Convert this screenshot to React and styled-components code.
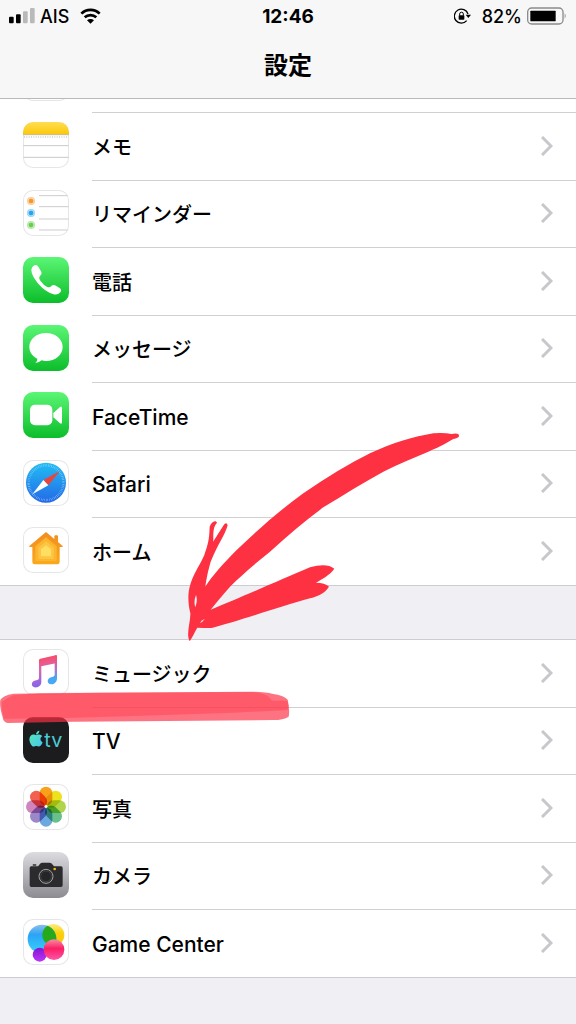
import styled, { createGlobalStyle } from "styled-components";
import { FaApple } from "react-icons/fa";

const GlobalStyle = createGlobalStyle`
  * {
    box-sizing: border-box;
  }

  body {
    margin: 0;
    background-color: #efeff4;
    color: #000;
    font-family: Inter, "Noto Sans CJK JP", sans-serif;
  }
`;

const MemoIcon = () => (
  <IconSvg viewBox="0 0 138 138">
    <defs>
      <linearGradient id="memo" x1="0" y1="0" x2="0" y2="1">
        <stop offset="0" stopColor="#ffde4f" />
        <stop offset="1" stopColor="#fbc70a" />
      </linearGradient>
    </defs>
    <path d="M0 38V30Q0 0 30 0H108Q138 0 138 30V38Z" fill="url(#memo)" />
    <path d="M0 38H138" stroke="#c6b98a" strokeWidth="3" />
    <path d="M3 45H136" stroke="#b5b5b5" strokeWidth="3" strokeDasharray="3 4" />
    <path d="M1 71H137M1 106H137" stroke="#c9c9cc" strokeWidth="3" />
  </IconSvg>
);

const ReminderIcon = () => (
  <IconSvg viewBox="0 0 138 138">
    <path d="M48 17H134M48 50H137M48 87H137M48 120H134" stroke="#cdcbd0" strokeWidth="3" />
    {[["#f39a2b", 33], ["#27a5ea", 69], ["#67cf4b", 105]].map(([color, y]) => (
      <g key={color}>
        <circle cx="24" cy={y} r="12" fill={color} opacity="0.5" />
        <circle cx="24" cy={y} r="9" fill="none" stroke="#fff" strokeWidth="1" opacity="0.7" />
        <circle cx="24" cy={y} r="7" fill={color} />
      </g>
    ))}
  </IconSvg>
);

const PhoneIcon = () => (
  <IconSvg viewBox="0 0 138 138">
    <path
      d="M34 25Q42 21 47 31L55 45Q58 52 51 57Q46 62 52 71Q61 84 73 90Q80 93 85 87Q90 82 96 85L111 94Q117 99 112 106Q104 115 92 112Q66 105 44 78Q25 54 25 38Q26 29 34 25Z"
      fill="#fff"
    />
  </IconSvg>
);

const MessageIcon = () => (
  <IconSvg viewBox="0 0 138 138">
    <path
      d="M69 24C97 24 119 42 119 66C119 90 97 108 69 108Q62 108 56 106Q49 113 37 114Q44 108 43 101C28 94 19 81 19 66C19 42 41 24 69 24Z"
      fill="#fff"
    />
  </IconSvg>
);

const FaceTimeIcon = () => (
  <IconSvg viewBox="0 0 138 138">
    <rect x="21" y="38" width="67" height="62" rx="15" fill="#fff" />
    <path d="M91 63L111 45Q117 41 117 49V90Q117 98 111 94L91 76Z" fill="#fff" />
  </IconSvg>
);

const SafariIcon = () => (
  <IconSvg viewBox="0 0 138 138">
    <defs>
      <linearGradient id="safari" x1="0" y1="0" x2="0" y2="1">
        <stop offset="0" stopColor="#22bdf4" />
        <stop offset="1" stopColor="#2469e6" />
      </linearGradient>
    </defs>
    <circle cx="69" cy="68" r="60" fill="url(#safari)" />
    <circle cx="69" cy="68" r="52" fill="none" stroke="#bfe6fb" strokeWidth="7" strokeDasharray="1 4" />
    <path d="M111 33L76 76L61 60Z" fill="#e9453f" />
    <path d="M28 103L61 60L76 76Z" fill="#fff" />
  </IconSvg>
);

const HomeIcon = () => (
  <IconSvg viewBox="0 0 138 138">
    <defs>
      <linearGradient id="home" x1="0" y1="0" x2="0" y2="1">
        <stop offset="0" stopColor="#f18d20" />
        <stop offset="1" stopColor="#fba81b" />
      </linearGradient>
    </defs>
    <path
      d="M69 15L94 36V28Q94 25 97 25H102Q105 25 105 28V45L119 57Q121 60 118 60H110V105Q110 112 103 112H35Q28 112 28 105V60H20Q17 60 19 57Z"
      fill="url(#home)"
    />
    <path d="M69 31L101 58V99Q101 103 97 103H41Q37 103 37 99V58Z" fill="#fcb52e" />
    <path d="M69 43L92 62V93Q92 96 89 96H49Q46 96 46 93V62Z" fill="#fdc544" />
    <path d="M69 55L84 67V85Q84 88 81 88H57Q54 88 54 85V67Z" fill="#ffdf62" />
  </IconSvg>
);

const MusicIcon = () => (
  <IconSvg viewBox="0 0 138 138">
    <defs>
      <linearGradient id="music" x1="0.3" y1="0" x2="0.5" y2="1">
        <stop offset="0.1" stopColor="#fb4b68" />
        <stop offset="0.45" stopColor="#d768b4" />
        <stop offset="1" stopColor="#7664fa" />
      </linearGradient>
      <linearGradient id="musicStem" x1="0" y1="0" x2="0" y2="1">
        <stop offset="0.1" stopColor="#f5506f" />
        <stop offset="0.45" stopColor="#b86fc9" />
        <stop offset="0.8" stopColor="#45a9f3" />
      </linearGradient>
    </defs>
    <path
      d="M48 34Q48 30 52 29L98 19Q102 18 102 22V42L55 52V99Q55 109 45 114Q34 118 28 111Q24 103 31 97Q36 94 43 93Q48 92 48 87Z"
      fill="url(#music)"
    />
    <path
      d="M95 20L98 19Q102 18 102 22V88Q102 99 93 104Q82 109 76 102Q71 94 79 87Q84 84 90 83Q95 82 95 77Z"
      fill="url(#musicStem)"
    />
  </IconSvg>
);

const TvIcon = () => (
  <IconSvg viewBox="0 0 138 138">
    <defs>
      <linearGradient id="tv" x1="0" y1="0" x2="1" y2="1">
        <stop offset="0" stopColor="#57ecb5" />
        <stop offset="1" stopColor="#45c5ee" />
      </linearGradient>
    </defs>
    <FaApple x="12" y="38" size="54" fill="url(#tv)" />
    <text x="64" y="89" fontSize="59" fontWeight="400" fill="#4ccbd6">tv</text>
  </IconSvg>
);

const petals = ["#f9a11b", "#ede21e", "#b0d44c", "#68c08c", "#6ba8df", "#9a88c9", "#cf86bd", "#f2604f"];

const PhotosIcon = () => (
  <IconSvg viewBox="0 0 138 138">
    {petals.map((color, i) => (
      <Petal key={color} x="50" y="8" width="38" height="57" rx="19" fill={color} transform={`rotate(${i * 45} 69 68)`} />
    ))}
    <circle cx="69" cy="67" r="4" fill="#fff" />
  </IconSvg>
);

const CameraIcon = () => (
  <IconSvg viewBox="0 0 138 138">
    <rect x="29" y="36" width="11" height="6" rx="2" fill="#555558" />
    <path
      d="M25 43H44Q48 42 50 37Q52 32 58 32H80Q86 32 88 37Q90 42 94 43H114Q119 43 119 48V100Q119 105 114 105H25Q20 105 20 100V48Q20 43 25 43Z"
      fill="#2b2b2d"
    />
    <circle cx="69" cy="73" r="21" fill="#2b2b2d" stroke="#a2a2a6" strokeWidth="3" />
    <circle cx="69" cy="73" r="16" fill="#252527" stroke="#4c4c50" strokeWidth="2" />
    <circle cx="95" cy="51" r="4" fill="#f8b90f" />
  </IconSvg>
);

const GameCenterIcon = () => (
  <IconSvg viewBox="0 0 138 138">
    <defs>
      <linearGradient id="gcBlue" x1="0" y1="0" x2="0" y2="1">
        <stop offset="0" stopColor="#8cc0e8" />
        <stop offset="0.35" stopColor="#2ba3f6" />
        <stop offset="1" stopColor="#38d4fb" />
      </linearGradient>
      <linearGradient id="gcYellow" x1="0" y1="0" x2="0" y2="1">
        <stop offset="0" stopColor="#f9ee8a" />
        <stop offset="0.4" stopColor="#fbd20a" />
        <stop offset="1" stopColor="#fcc316" />
      </linearGradient>
      <linearGradient id="gcPink" x1="0" y1="0" x2="0" y2="1">
        <stop offset="0" stopColor="#f98aa0" />
        <stop offset="0.45" stopColor="#fb1f66" />
        <stop offset="1" stopColor="#fd55a8" />
      </linearGradient>
      <linearGradient id="gcPurple" x1="0" y1="0" x2="0" y2="1">
        <stop offset="0" stopColor="#8514cf" />
        <stop offset="1" stopColor="#ba36fa" />
      </linearGradient>
      <clipPath id="gcOverlap">
        <circle cx="91" cy="48" r="33" />
      </clipPath>
    </defs>
    <circle cx="91" cy="48" r="33" fill="url(#gcYellow)" />
    <circle cx="57" cy="60" r="43" fill="url(#gcBlue)" />
    <circle cx="57" cy="60" r="43" fill="#26a91b" clipPath="url(#gcOverlap)" />
    <circle cx="50" cy="107" r="21" fill="url(#gcPurple)" />
    <circle cx="93" cy="92" r="31" fill="url(#gcPink)" />
  </IconSvg>
);

const GREEN = "linear-gradient(#5bf675, #0cbd2a)";

const apps = [
  { name: "メモ", Icon: MemoIcon },
  { name: "リマインダー", Icon: ReminderIcon },
  { name: "電話", Icon: PhoneIcon, background: GREEN },
  { name: "メッセージ", Icon: MessageIcon, background: GREEN },
  { name: "FaceTime", Icon: FaceTimeIcon, background: GREEN, latin: true },
  { name: "Safari", Icon: SafariIcon, latin: true },
  { name: "ホーム", Icon: HomeIcon },
];

const media = [
  { name: "ミュージック", Icon: MusicIcon },
  { name: "TV", Icon: TvIcon, background: "#1c1c1e", latin: true },
  { name: "写真", Icon: PhotosIcon },
  { name: "カメラ", Icon: CameraIcon, background: "linear-gradient(#dcdbe0, #8b8b91)" },
  { name: "Game Center", Icon: GameCenterIcon, latin: true },
];

const SettingsGroup = ({ items }) => (
  <Group>
    {items.map(({ name, Icon, background, latin }) => (
      <Row key={name}>
        <RowLink href="#!">
          <AppIcon $background={background}>
            <Icon />
          </AppIcon>
          <RowBody>
            <RowLabel $latin={latin}>{name}</RowLabel>
            <Chevron viewBox="0 0 12 20">
              <path d="M1 1L10 10L1 19" fill="none" stroke="#c7c7cc" strokeWidth="3" />
            </Chevron>
          </RowBody>
        </RowLink>
      </Row>
    ))}
  </Group>
);

const App = () => {
  return (
    <Page>
      <GlobalStyle />
      <Header>
        <StatusBar>
          <StatusSide>
            <svg width="26" height="16" viewBox="0 0 78 48">
              <rect x="0" y="26" width="14" height="20" rx="3" fill="#000" />
              <rect x="21" y="19" width="14" height="27" rx="3" fill="#000" />
              <rect x="42" y="10" width="14" height="36" rx="3" fill="#b9b9b9" />
              <rect x="63" y="0" width="14" height="46" rx="3" fill="#b9b9b9" />
            </svg>
            <span>AIS</span>
            <WifiSvg viewBox="0 0 63 48">
              <path d="M4 17A39 39 0 0 1 59 17M14 28A26 26 0 0 1 49 28" fill="none" stroke="#000" strokeWidth="8" />
              <path d="M31.5 47L21 37A15 15 0 0 1 42 37Z" />
            </WifiSvg>
          </StatusSide>
          <Time>12:46</Time>
          <StatusSide $end>
            <LockSvg viewBox="0 0 54 48">
              <path d="M42 18A21 21 0 1 0 38 38" fill="none" stroke="#000" strokeWidth="4" />
              <path d="M35 20H51L43 30Z" />
              <rect x="14" y="22" width="17" height="13" rx="2" />
              <path d="M17 23V18A5 5 0 0 1 28 18V23" fill="none" stroke="#000" strokeWidth="3" />
            </LockSvg>
            <span>82%</span>
            <svg width="40" height="18" viewBox="0 0 120 54">
              <rect x="2" y="3" width="106" height="48" rx="12" fill="none" stroke="#8c8c8c" strokeWidth="4" />
              <rect x="10" y="11" width="76" height="32" rx="2" />
              <path d="M113 19Q119 27 113 35Z" fill="#8c8c8c" />
            </svg>
          </StatusSide>
        </StatusBar>
        <Title>設定</Title>
      </Header>
      <main>
        <CutRow>
          <AppIcon />
          <CutBody />
        </CutRow>
        <SettingsGroup items={apps} />
        <SettingsGroup items={media} />
      </main>
      <Arrow viewBox="0 0 900 690">
        <path
          fillRule="evenodd"
          d="M58 662C48 640 62 605 61 580C54 550 52 520 62 490C75 450 100 420 106 395C117 365 118 345 119 320C124 306 136 299 141 308C134 318 129 320 130 365C142 345 155 325 163 313Q170 306 173 316C165 345 145 370 122 425C112 460 109 480 106 500C125 470 160 430 200 390C265 328 330 270 400 220C470 172 535 132 600 100C670 68 730 50 790 40Q820 37 845 42Q868 38 867 48Q866 54 850 57C820 75 800 84 775 95C730 114 685 132 640 155C580 188 520 225 460 262C405 303 352 348 300 395C250 435 210 470 180 500Q145 540 122 569C200 538 330 480 420 442Q470 428 493 446C480 465 455 478 438 488Q465 488 477 500C465 520 440 530 420 535C330 560 200 605 125 624Q100 624 82 623C72 640 66 655 60 662ZM78 525Q84 540 76 562Q70 545 78 525ZM104 597Q98 606 90 609Q94 600 104 597Z"
        />
      </Arrow>
      <Marker viewBox="0 180 900 105">
        <path
          d="M1 210Q8 196 40 191L300 188L750 185Q800 186 816 191Q852 195 863 209Q870 240 866 260Q850 270 820 270L500 273L220 275L24 279Q10 278 8 262Q-2 230 1 210Z"
          opacity="0.68"
        />
        <path
          d="M5 216Q20 205 40 196L120 189L750 186Q805 188 816 212L862 212Q868 230 862 240L700 248L400 258L200 264L12 266Q4 240 5 216Z"
          opacity="0.38"
        />
      </Marker>
    </Page>
  );
};

export default App;

const Page = styled.div`
  position: relative;
  min-height: 100vh;
`;

const Header = styled.header`
  height: 99px;
  background-color: #f7f7f7;
  border-bottom: 1px solid #b9b9bc;
`;

const StatusBar = styled.div`
  display: grid;
  grid-template-columns: 1fr auto 1fr;
  align-items: center;
  height: 32px;
  padding: 0 9px;
  font-size: 18px;
  font-weight: 500;
`;

const StatusSide = styled.div`
  display: flex;
  align-items: center;
  justify-content: ${({ $end }) => ($end ? "flex-end" : "flex-start")};
  column-gap: 5px;
`;

const Time = styled.span`
  font-size: 19px;
  font-weight: 700;
`;

const WifiSvg = styled.svg`
  width: 21px;
  height: 16px;
  margin-left: 6px;
`;

const LockSvg = styled.svg`
  width: 18px;
  height: 16px;
  margin-right: 5px;
`;

const Title = styled.h1`
  margin: 0;
  font-size: 24px;
  font-weight: 700;
  line-height: 68px;
  text-align: center;
`;

const AppIcon = styled.span`
  flex: none;
  width: 46px;
  height: 46px;
  border-radius: 10px;
  background: ${({ $background }) => $background || "#fff"};
  box-shadow: ${({ $background }) => ($background ? "none" : "inset 0 0 0 1px #e6e6e8")};
  overflow: hidden;
`;

const IconSvg = styled.svg`
  display: block;
  width: 100%;
  height: 100%;
  isolation: isolate;
`;

const Petal = styled.rect`
  mix-blend-mode: multiply;
`;

const CutRow = styled.div`
  display: flex;
  align-items: flex-end;
  column-gap: 23px;
  height: 14px;
  padding-left: 23px;
  background-color: #fff;
  overflow: hidden;

  ${AppIcon} {
    margin-bottom: 12px;
  }
`;

const CutBody = styled.span`
  flex: 1;
  border-bottom: 1px solid #d0d0d3;
`;

const Group = styled.ul`
  margin: 0;
  padding: 0;
  list-style: none;
  background-color: #fff;

  & + & {
    margin-top: 53px;
    border-top: 1px solid #cdcdd1;
  }
`;

const RowBody = styled.span`
  display: flex;
  flex: 1;
  align-items: center;
  justify-content: space-between;
  align-self: stretch;
  padding: 0 23px 2px 0;
  border-bottom: 1px solid #d0d0d3;
`;

const Row = styled.li`
  height: 68px;

  &:nth-child(even) {
    height: 67px;
  }

  &:last-child {
    border-bottom: 1px solid #cdcdd1;
  }

  &:last-child ${RowBody} {
    border-bottom: none;
  }
`;

const RowLink = styled.a`
  display: flex;
  align-items: center;
  column-gap: 23px;
  height: 100%;
  padding-left: 23px;
  color: inherit;
  text-decoration: none;

  ${AppIcon} {
    margin-bottom: 4px;
  }
`;

const RowLabel = styled.span`
  padding-top: 4px;
  font-size: ${({ $latin }) => ($latin ? "21px" : "20px")};
  font-weight: 500;
  line-height: 28px;
`;

const Chevron = styled.svg`
  width: 12px;
  height: 20px;
`;

const Arrow = styled.svg`
  position: absolute;
  top: 420px;
  left: 170px;
  width: 300px;
  height: 230px;
  fill: #fe3142;
  pointer-events: none;
`;

const Marker = styled.svg`
  position: absolute;
  top: 690px;
  left: 0;
  width: 300px;
  height: 35px;
  fill: #fe3145;
  pointer-events: none;
`;
